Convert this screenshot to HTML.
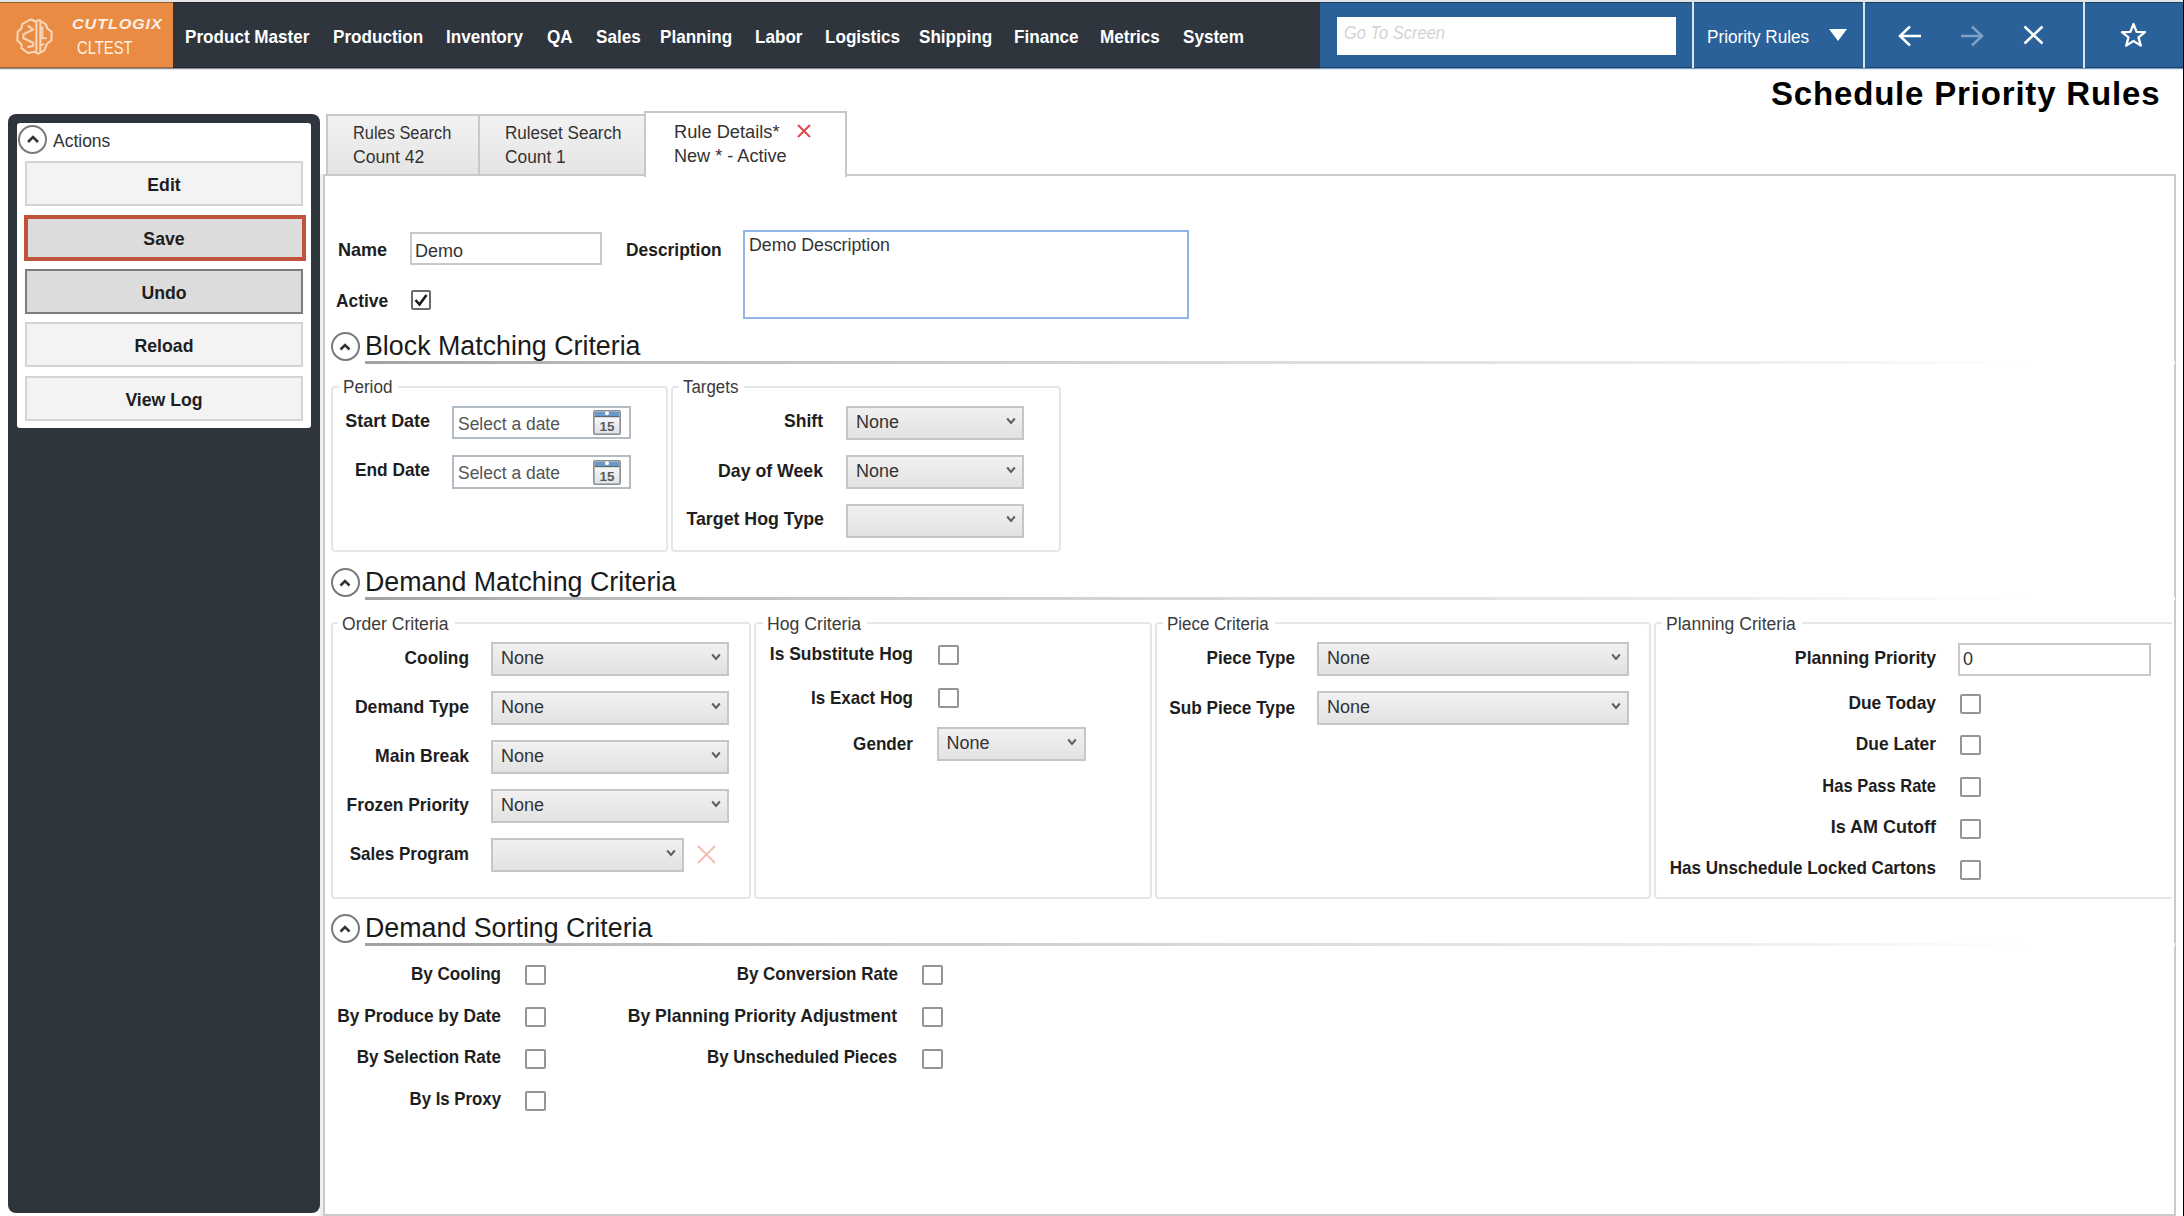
<!DOCTYPE html>
<html><head><meta charset="utf-8"><style>
*{box-sizing:border-box;margin:0;padding:0}
html,body{width:2184px;height:1216px;overflow:hidden;background:#fff;font-family:"Liberation Sans",sans-serif;color:#1e1e1e;position:relative}
div,span,svg{position:absolute;white-space:nowrap}
.btn{left:25px;width:278px;height:45px;background:#f3f3f3;border:2px solid #d4d4d4}
.tabg{border:2px solid #c8c8c8;border-bottom:none;background:linear-gradient(#f2f2f2,#e4e4e4)}
.chev{width:29px;height:29px;border:2px solid #7a7a7a;border-radius:50%}
.hr{height:3px;background:linear-gradient(90deg,#a2a2a2 0%,#bdbdbd 15%,#dadada 48%,#eeeeee 76%,#ffffff 92%)}
.grp{border:2px solid #e2e7eb;border-radius:4px}
.combo{height:34px;background:linear-gradient(#f1f1f1,#e2e2e2);border:2px solid #c6c6c6}
.cb{width:21px;height:20px;border:2px solid #959595;border-radius:2px;background:#fff}
.inp{background:#fff;border:2px solid #c9c9c9}
</style></head><body>
<div style="left:0;top:0;width:2184px;height:2px;background:#e3e5e8"></div>
<div style="left:0;top:2px;width:2184px;height:66px;background:#2e353d"></div>
<div style="left:0;top:2px;width:173px;height:66px;background:#e98b43"></div>
<div style="left:1320px;top:2px;width:864px;height:66px;background:#2a6199"></div>
<div style="left:0;top:2px;width:2184px;height:1px;background:rgba(0,0,0,0.35)"></div>
<div style="left:0;top:67px;width:2184px;height:1px;background:rgba(0,0,0,0.3)"></div>
<div style="left:0;top:68px;width:1320px;height:1px;background:#8a9097"></div>
<div style="left:0;top:69px;width:1320px;height:1px;background:#dfe3e7"></div>
<div style="left:1320px;top:68px;width:864px;height:1px;background:#7d9cbd"></div>
<div style="left:1320px;top:69px;width:864px;height:1px;background:#e4ebf2"></div>
<svg style="left:12px;top:14px" width="46" height="46" viewBox="0 0 46 46" fill="none" stroke="#f7d6b8" stroke-width="2.1" stroke-linejoin="round" stroke-linecap="round">
<path d="M22.7 7.6 C21 5.5 19.5 5.4 18.2 5.7 L10.2 10.2 L9.5 14.4 L5.7 17.8 L5.3 26.5 L9.5 30.3 L9.5 34.1 L15.9 39 L22.7 37.8 L26.5 39.7 L32.2 36.3 L35.2 29.5 L39.3 26.5 L39.7 17.8 L35.2 14.4 L34 10.6 L27.2 6 Z"/>
<path d="M24.4 7.2 V36.5 M28.4 6.8 V37"/>
<path d="M16.3 12.1 L21.2 15.5 L11.4 20.4 L11.4 24.2 L21.2 28.8 L21.2 32 L16.3 32.9"/>
<path d="M30.3 13.2 V24.2 H34 M28.4 31.2 L31.5 30.3"/>
</svg>
<span style="left:72px;top:16.30px;font-size:15px;line-height:15px;font-weight:bold;color:#fdf0e4;transform:scaleX(1.08);transform-origin:left top;font-style:italic;letter-spacing:0.8px;">CUTLOGIX</span>
<span style="left:77px;top:39.26px;font-size:18px;line-height:18px;font-weight:normal;color:#fdf0e4;transform:scaleX(0.82);transform-origin:left top;">CLTEST</span>
<span style="left:185px;top:26.92px;font-size:19px;line-height:19px;font-weight:bold;color:#ffffff;transform:scaleX(0.9);transform-origin:left top;">Product Master</span>
<span style="left:333px;top:26.92px;font-size:19px;line-height:19px;font-weight:bold;color:#ffffff;transform:scaleX(0.9);transform-origin:left top;">Production</span>
<span style="left:446px;top:26.92px;font-size:19px;line-height:19px;font-weight:bold;color:#ffffff;transform:scaleX(0.9);transform-origin:left top;">Inventory</span>
<span style="left:547px;top:26.92px;font-size:19px;line-height:19px;font-weight:bold;color:#ffffff;transform:scaleX(0.9);transform-origin:left top;">QA</span>
<span style="left:596px;top:26.92px;font-size:19px;line-height:19px;font-weight:bold;color:#ffffff;transform:scaleX(0.9);transform-origin:left top;">Sales</span>
<span style="left:660px;top:26.92px;font-size:19px;line-height:19px;font-weight:bold;color:#ffffff;transform:scaleX(0.9);transform-origin:left top;">Planning</span>
<span style="left:755px;top:26.92px;font-size:19px;line-height:19px;font-weight:bold;color:#ffffff;transform:scaleX(0.9);transform-origin:left top;">Labor</span>
<span style="left:825px;top:26.92px;font-size:19px;line-height:19px;font-weight:bold;color:#ffffff;transform:scaleX(0.9);transform-origin:left top;">Logistics</span>
<span style="left:919px;top:26.92px;font-size:19px;line-height:19px;font-weight:bold;color:#ffffff;transform:scaleX(0.9);transform-origin:left top;">Shipping</span>
<span style="left:1014px;top:26.92px;font-size:19px;line-height:19px;font-weight:bold;color:#ffffff;transform:scaleX(0.9);transform-origin:left top;">Finance</span>
<span style="left:1100px;top:26.92px;font-size:19px;line-height:19px;font-weight:bold;color:#ffffff;transform:scaleX(0.9);transform-origin:left top;">Metrics</span>
<span style="left:1183px;top:26.92px;font-size:19px;line-height:19px;font-weight:bold;color:#ffffff;transform:scaleX(0.9);transform-origin:left top;">System</span>
<div style="left:1337px;top:17px;width:339px;height:38px;background:#fff"></div>
<span style="left:1344px;top:24.26px;font-size:18px;line-height:18px;font-weight:normal;color:#d3d3d3;transform:scaleX(0.915);transform-origin:left top;font-style:italic;">Go To Screen</span>
<div style="left:1692px;top:2px;width:2px;height:66px;background:#d9e3ee"></div>
<div style="left:1863px;top:2px;width:2px;height:66px;background:#d9e3ee"></div>
<div style="left:2083px;top:2px;width:2px;height:66px;background:#d9e3ee"></div>
<span style="left:1707px;top:27.76px;font-size:18px;line-height:18px;font-weight:normal;color:#ffffff;transform:scaleX(0.955);transform-origin:left top;">Priority Rules</span>
<svg style="left:1828px;top:28px" width="20" height="14"><path d="M1 1 H19 L10 13 Z" fill="#fff"/></svg>
<svg style="left:1898px;top:25px" width="24" height="22" fill="none" stroke="#fff" stroke-width="2.5"><path d="M2 11 H23 M12 1.5 L2 11 L12 20.5"/></svg>
<svg style="left:1960px;top:25px" width="24" height="22" fill="none" stroke="#7fa3c8" stroke-width="2.5"><path d="M1 11 H22 M12 1.5 L22 11 L12 20.5"/></svg>
<svg style="left:2023px;top:25px" width="21" height="20" fill="none" stroke="#fff" stroke-width="2.6"><path d="M1.5 1.5 L19.5 18.5 M19.5 1.5 L1.5 18.5"/></svg>
<svg style="left:2120px;top:22px" width="27" height="26" fill="none" stroke="#fff" stroke-width="2.3" stroke-linejoin="round"><path d="M13.5 2 L16.6 9.8 L25 10.2 L18.5 15.4 L20.8 23.6 L13.5 19 L6.2 23.6 L8.5 15.4 L2 10.2 L10.4 9.8 Z"/></svg>
<div style="left:2183px;top:0px;width:1px;height:1216px;background:#000"></div>
<span style="left:1771px;top:75px;font-size:33px;font-weight:bold;color:#000;letter-spacing:0.82px;line-height:38px">Schedule Priority Rules</span>
<div style="left:8px;top:114px;width:312px;height:1098.5px;background:#2e353d;border-radius:8px"></div>
<div style="left:17px;top:123px;width:294px;height:305px;background:#fff;border-radius:3px"></div>
<div class="chev" style="left:18px;top:125px;border-color:#7a7a7a"></div>
<svg style="left:26px;top:134px" width="14" height="10" fill="none" stroke="#333" stroke-width="2.6"><path d="M2 8 L7 3 L12 8"/></svg>
<span style="left:53px;top:130.92px;font-size:19px;line-height:19px;font-weight:normal;color:#333;transform:scaleX(0.92);transform-origin:left top;">Actions</span>
<div class="btn" style="top:161px;background:#f3f3f3;border-color:#d4d4d4"></div>
<span style="left:-186.0px;width:700px;text-align:center;top:175.42px;font-size:19px;line-height:19px;font-weight:bold;color:#1e1e1e;transform:scaleX(0.93);transform-origin:center top;">Edit</span>
<div class="btn" style="left:24px;top:215px;width:282px;height:46px;background:#dcdcdc;border:4px solid #c0533b"></div>
<span style="left:-186.0px;width:700px;text-align:center;top:229.42px;font-size:19px;line-height:19px;font-weight:bold;color:#1e1e1e;transform:scaleX(0.93);transform-origin:center top;">Save</span>
<div class="btn" style="top:269px;background:#dcdcdc;border-color:#7d7d7d"></div>
<span style="left:-186.0px;width:700px;text-align:center;top:283.42px;font-size:19px;line-height:19px;font-weight:bold;color:#1e1e1e;transform:scaleX(0.93);transform-origin:center top;">Undo</span>
<div class="btn" style="top:322px;background:#f3f3f3;border-color:#d4d4d4"></div>
<span style="left:-186.0px;width:700px;text-align:center;top:336.42px;font-size:19px;line-height:19px;font-weight:bold;color:#1e1e1e;transform:scaleX(0.93);transform-origin:center top;">Reload</span>
<div class="btn" style="top:376px;background:#f3f3f3;border-color:#d4d4d4"></div>
<span style="left:-186.0px;width:700px;text-align:center;top:390.42px;font-size:19px;line-height:19px;font-weight:bold;color:#1e1e1e;transform:scaleX(0.93);transform-origin:center top;">View Log</span>
<div class="tabg" style="left:326px;top:114px;width:154px;height:62px"></div>
<div class="tabg" style="left:478px;top:114px;width:168px;height:62px"></div>
<div style="left:322.5px;top:174px;width:1853.5px;height:1042px;border:2px solid #cacaca;background:#fff"></div>
<div style="left:320px;top:174px;width:2.5px;height:1042px;background:#eeefef"></div>
<div style="left:644px;top:111px;width:203px;height:66px;background:#fff;border:2px solid #c8c8c8;border-bottom:none"></div>
<span style="left:353px;top:124.26px;font-size:18px;line-height:18px;font-weight:normal;color:#333;transform:scaleX(0.91);transform-origin:left top;">Rules Search</span>
<span style="left:353px;top:148.26px;font-size:18px;line-height:18px;font-weight:normal;color:#333;transform:scaleX(0.977);transform-origin:left top;">Count 42</span>
<span style="left:505px;top:124.26px;font-size:18px;line-height:18px;font-weight:normal;color:#333;transform:scaleX(0.947);transform-origin:left top;">Ruleset Search</span>
<span style="left:505px;top:148.26px;font-size:18px;line-height:18px;font-weight:normal;color:#333;transform:scaleX(0.963);transform-origin:left top;">Count 1</span>
<span style="left:674px;top:122.76px;font-size:18px;line-height:18px;font-weight:normal;color:#333;transform:scaleX(1.015);transform-origin:left top;">Rule Details*</span>
<span style="left:674px;top:146.76px;font-size:18px;line-height:18px;font-weight:normal;color:#333;transform:scaleX(1.005);transform-origin:left top;">New * - Active</span>
<svg style="left:797px;top:124px" width="14" height="14" fill="none" stroke="#e04848" stroke-width="2"><path d="M1 1 L13 13 M13 1 L1 13"/></svg>
<span style="left:338px;top:239.92px;font-size:19px;line-height:19px;font-weight:bold;color:#1e1e1e;transform:scaleX(0.95);transform-origin:left top;">Name</span>
<div class="inp" style="left:410px;top:232px;width:192px;height:33px"></div>
<span style="left:415px;top:241.76px;font-size:18px;line-height:18px;font-weight:normal;color:#333;">Demo</span>
<span style="left:625.5px;top:239.92px;font-size:19px;line-height:19px;font-weight:bold;color:#1e1e1e;transform:scaleX(0.915);transform-origin:left top;">Description</span>
<div class="inp" style="left:743px;top:229.5px;width:446px;height:89px;border-color:#90b5e6"></div>
<span style="left:748.5px;top:235.76px;font-size:18px;line-height:18px;font-weight:normal;color:#333;transform:scaleX(0.985);transform-origin:left top;">Demo Description</span>
<span style="left:335.5px;top:290.92px;font-size:19px;line-height:19px;font-weight:bold;color:#1e1e1e;transform:scaleX(0.915);transform-origin:left top;">Active</span>
<div class="cb" style="left:411px;top:290px;width:20px;height:20px;border-color:#6a6a6a"></div>
<svg style="left:413px;top:292px" width="16" height="16" fill="none" stroke="#1a1a1a" stroke-width="2.6"><path d="M2.5 8 L6.5 12.5 L13.5 3"/></svg>
<div class="chev" style="left:330.5px;top:332px"></div>
<svg style="left:339px;top:342px" width="12" height="9" fill="none" stroke="#333" stroke-width="2.6"><path d="M1.5 7.5 L6 3 L10.5 7.5"/></svg>
<span style="left:365px;top:332.51px;font-size:26.8px;line-height:26.8px;font-weight:normal;color:#1a1a1a;">Block Matching Criteria</span>
<div class="hr" style="left:365px;top:360.5px;width:1810px"></div>
<div class="chev" style="left:330.5px;top:568px"></div>
<svg style="left:339px;top:578px" width="12" height="9" fill="none" stroke="#333" stroke-width="2.6"><path d="M1.5 7.5 L6 3 L10.5 7.5"/></svg>
<span style="left:365px;top:568.51px;font-size:26.8px;line-height:26.8px;font-weight:normal;color:#1a1a1a;">Demand Matching Criteria</span>
<div class="hr" style="left:365px;top:596.5px;width:1810px"></div>
<div class="chev" style="left:330.5px;top:914px"></div>
<svg style="left:339px;top:924px" width="12" height="9" fill="none" stroke="#333" stroke-width="2.6"><path d="M1.5 7.5 L6 3 L10.5 7.5"/></svg>
<span style="left:365px;top:914.51px;font-size:26.8px;line-height:26.8px;font-weight:normal;color:#1a1a1a;">Demand Sorting Criteria</span>
<div class="hr" style="left:365px;top:942.5px;width:1810px"></div>
<div class="grp" style="left:330.6px;top:385.7px;width:337.4px;height:166.7px;"></div>
<div style="left:338.6px;top:381.7px;width:59.4px;height:10px;background:#fff"></div>
<span style="left:342.6px;top:378.46px;font-size:18px;line-height:18px;font-weight:normal;color:#3b3b3b;transform:scaleX(0.95);transform-origin:left top;">Period</span>
<div class="grp" style="left:670.5px;top:385.7px;width:390.5px;height:166.7px;"></div>
<div style="left:678.9px;top:381.7px;width:65.3px;height:10px;background:#fff"></div>
<span style="left:682.9px;top:378.46px;font-size:18px;line-height:18px;font-weight:normal;color:#3b3b3b;transform:scaleX(0.9373);transform-origin:left top;">Targets</span>
<span style="left:-270.07511764705885px;width:700px;text-align:right;top:411.42px;font-size:19px;line-height:19px;font-weight:bold;color:#1e1e1e;transform:scaleX(0.9429);transform-origin:right top;">Start Date</span>
<span style="left:-270.08796474358974px;width:700px;text-align:right;top:459.92px;font-size:19px;line-height:19px;font-weight:bold;color:#1e1e1e;transform:scaleX(0.9121);transform-origin:right top;">End Date</span>
<div class="inp" style="left:452px;top:405.5px;width:178.5px;height:33.5px;border-color:#b3bcc5"></div>
<span style="left:458px;top:414.76px;font-size:18px;line-height:18px;font-weight:normal;color:#555;transform:scaleX(0.97);transform-origin:left top;">Select a date</span>
<svg style="left:593px;top:410.0px" width="28" height="25"><defs><linearGradient id="cg405" x1="0" y1="0" x2="0" y2="1"><stop offset="0" stop-color="#ffffff"/><stop offset="1" stop-color="#dde1e5"/></linearGradient></defs><rect x="0.8" y="0.8" width="26.4" height="23.4" rx="1.5" fill="url(#cg405)" stroke="#8c8c8c" stroke-width="1.6"/><rect x="1.6" y="1.6" width="24.8" height="4.6" fill="#6b97c8"/><rect x="1.6" y="6" width="24.8" height="1.2" fill="#5d6873"/><circle cx="14" cy="3.3" r="2" fill="#fff"/><text x="14" y="21" font-size="13.5" font-family="Liberation Sans" font-weight="bold" fill="#5a5a5a" text-anchor="middle">15</text></svg>
<div class="inp" style="left:452px;top:455px;width:178.5px;height:33.5px;border-color:#b3bcc5"></div>
<span style="left:458px;top:464.26px;font-size:18px;line-height:18px;font-weight:normal;color:#555;transform:scaleX(0.97);transform-origin:left top;">Select a date</span>
<svg style="left:593px;top:459.5px" width="28" height="25"><defs><linearGradient id="cg455" x1="0" y1="0" x2="0" y2="1"><stop offset="0" stop-color="#ffffff"/><stop offset="1" stop-color="#dde1e5"/></linearGradient></defs><rect x="0.8" y="0.8" width="26.4" height="23.4" rx="1.5" fill="url(#cg455)" stroke="#8c8c8c" stroke-width="1.6"/><rect x="1.6" y="1.6" width="24.8" height="4.6" fill="#6b97c8"/><rect x="1.6" y="6" width="24.8" height="1.2" fill="#5d6873"/><circle cx="14" cy="3.3" r="2" fill="#fff"/><text x="14" y="21" font-size="13.5" font-family="Liberation Sans" font-weight="bold" fill="#5a5a5a" text-anchor="middle">15</text></svg>
<span style="left:123.49085937500001px;width:700px;text-align:right;top:411.42px;font-size:19px;line-height:19px;font-weight:bold;color:#1e1e1e;transform:scaleX(0.9237);transform-origin:right top;">Shift</span>
<div class="combo" style="left:846px;top:405.5px;width:178px"></div>
<span style="left:856px;top:412.76px;font-size:18px;line-height:18px;font-weight:normal;color:#333;">None</span>
<svg style="left:1005.5px;top:416.5px" width="10" height="8" fill="none" stroke="#5e5e5e" stroke-width="2"><path d="M1.2 1.5 L5 6 L8.8 1.5"/></svg>
<span style="left:123.41081753277149px;width:700px;text-align:right;top:460.92px;font-size:19px;line-height:19px;font-weight:bold;color:#1e1e1e;transform:scaleX(0.9323);transform-origin:right top;">Day of Week</span>
<div class="combo" style="left:846px;top:455px;width:178px"></div>
<span style="left:856px;top:462.26px;font-size:18px;line-height:18px;font-weight:normal;color:#333;">None</span>
<svg style="left:1005.5px;top:466px" width="10" height="8" fill="none" stroke="#5e5e5e" stroke-width="2"><path d="M1.2 1.5 L5 6 L8.8 1.5"/></svg>
<span style="left:123.5431846733668px;width:700px;text-align:right;top:509.42px;font-size:19px;line-height:19px;font-weight:bold;color:#1e1e1e;transform:scaleX(0.9351);transform-origin:right top;">Target Hog Type</span>
<div class="combo" style="left:846px;top:503.5px;width:178px"></div>
<svg style="left:1005.5px;top:514.5px" width="10" height="8" fill="none" stroke="#5e5e5e" stroke-width="2"><path d="M1.2 1.5 L5 6 L8.8 1.5"/></svg>
<div class="grp" style="left:330.6px;top:622px;width:420.8px;height:276.8px;"></div>
<div style="left:338.3px;top:618px;width:116.5px;height:10px;background:#fff"></div>
<span style="left:342.3px;top:614.76px;font-size:18px;line-height:18px;font-weight:normal;color:#3b3b3b;transform:scaleX(0.9762);transform-origin:left top;">Order Criteria</span>
<div class="grp" style="left:753.9px;top:622px;width:398.6px;height:276.8px;"></div>
<div style="left:762.7px;top:618px;width:104.2px;height:10px;background:#fff"></div>
<span style="left:766.7px;top:614.76px;font-size:18px;line-height:18px;font-weight:normal;color:#3b3b3b;transform:scaleX(0.9802);transform-origin:left top;">Hog Criteria</span>
<div class="grp" style="left:1154.9px;top:622px;width:496.4px;height:276.8px;"></div>
<div style="left:1163.2px;top:618px;width:111.8px;height:10px;background:#fff"></div>
<span style="left:1167.2px;top:614.76px;font-size:18px;line-height:18px;font-weight:normal;color:#3b3b3b;transform:scaleX(0.9417);transform-origin:left top;">Piece Criteria</span>
<div class="grp" style="left:1653.9px;top:622px;width:518.1px;height:276.8px;border-right:none;border-top-right-radius:0;border-bottom-right-radius:0;"></div>
<div style="left:1661.8px;top:618px;width:140.0px;height:10px;background:#fff"></div>
<span style="left:1665.8px;top:614.76px;font-size:18px;line-height:18px;font-weight:normal;color:#3b3b3b;transform:scaleX(0.976);transform-origin:left top;">Planning Criteria</span>
<span style="left:-231.21652052238807px;width:700px;text-align:right;top:647.72px;font-size:19px;line-height:19px;font-weight:bold;color:#1e1e1e;transform:scaleX(0.9106);transform-origin:right top;">Cooling</span>
<div class="combo" style="left:491px;top:641.5px;width:238px"></div>
<span style="left:501px;top:648.76px;font-size:18px;line-height:18px;font-weight:normal;color:#333;">None</span>
<svg style="left:710.5px;top:652.5px" width="10" height="8" fill="none" stroke="#5e5e5e" stroke-width="2"><path d="M1.2 1.5 L5 6 L8.8 1.5"/></svg>
<span style="left:-231.20611075407027px;width:700px;text-align:right;top:696.72px;font-size:19px;line-height:19px;font-weight:bold;color:#1e1e1e;transform:scaleX(0.9263);transform-origin:right top;">Demand Type</span>
<div class="combo" style="left:491px;top:690.5px;width:238px"></div>
<span style="left:501px;top:697.76px;font-size:18px;line-height:18px;font-weight:normal;color:#333;">None</span>
<svg style="left:710.5px;top:701.5px" width="10" height="8" fill="none" stroke="#5e5e5e" stroke-width="2"><path d="M1.2 1.5 L5 6 L8.8 1.5"/></svg>
<span style="left:-231.2596058792924px;width:700px;text-align:right;top:745.72px;font-size:19px;line-height:19px;font-weight:bold;color:#1e1e1e;transform:scaleX(0.9267);transform-origin:right top;">Main Break</span>
<div class="combo" style="left:491px;top:739.5px;width:238px"></div>
<span style="left:501px;top:746.76px;font-size:18px;line-height:18px;font-weight:normal;color:#333;">None</span>
<svg style="left:710.5px;top:750.5px" width="10" height="8" fill="none" stroke="#5e5e5e" stroke-width="2"><path d="M1.2 1.5 L5 6 L8.8 1.5"/></svg>
<span style="left:-231.17891732283465px;width:700px;text-align:right;top:794.72px;font-size:19px;line-height:19px;font-weight:bold;color:#1e1e1e;transform:scaleX(0.9131);transform-origin:right top;">Frozen Priority</span>
<div class="combo" style="left:491px;top:788.5px;width:238px"></div>
<span style="left:501px;top:795.76px;font-size:18px;line-height:18px;font-weight:normal;color:#333;">None</span>
<svg style="left:710.5px;top:799.5px" width="10" height="8" fill="none" stroke="#5e5e5e" stroke-width="2"><path d="M1.2 1.5 L5 6 L8.8 1.5"/></svg>
<span style="left:-231.23399955392546px;width:700px;text-align:right;top:843.92px;font-size:19px;line-height:19px;font-weight:bold;color:#1e1e1e;transform:scaleX(0.8963);transform-origin:right top;">Sales Program</span>
<div class="combo" style="left:491px;top:837.5px;width:193px"></div>
<svg style="left:665.5px;top:848.5px" width="10" height="8" fill="none" stroke="#5e5e5e" stroke-width="2"><path d="M1.2 1.5 L5 6 L8.8 1.5"/></svg>
<svg style="left:696px;top:844px" width="21" height="21" fill="none" stroke="#f5bdb2" stroke-width="2"><path d="M2 2 L19 19 M19 2 L2 19"/></svg>
<span style="left:213.30151182432428px;width:700px;text-align:right;top:644.42px;font-size:19px;line-height:19px;font-weight:bold;color:#1e1e1e;transform:scaleX(0.9166);transform-origin:right top;">Is Substitute Hog</span>
<div class="cb" style="left:938px;top:645px"></div>
<span style="left:213.3353819444444px;width:700px;text-align:right;top:687.92px;font-size:19px;line-height:19px;font-weight:bold;color:#1e1e1e;transform:scaleX(0.8939);transform-origin:right top;">Is Exact Hog</span>
<div class="cb" style="left:938px;top:688px"></div>
<span style="left:213.31782738095228px;width:700px;text-align:right;top:733.92px;font-size:19px;line-height:19px;font-weight:bold;color:#1e1e1e;transform:scaleX(0.9008);transform-origin:right top;">Gender</span>
<div class="combo" style="left:936.5px;top:726.5px;width:149px"></div>
<span style="left:946.5px;top:733.76px;font-size:18px;line-height:18px;font-weight:normal;color:#333;">None</span>
<svg style="left:1067.0px;top:737.5px" width="10" height="8" fill="none" stroke="#5e5e5e" stroke-width="2"><path d="M1.2 1.5 L5 6 L8.8 1.5"/></svg>
<span style="left:595.417900485437px;width:700px;text-align:right;top:648.42px;font-size:19px;line-height:19px;font-weight:bold;color:#1e1e1e;transform:scaleX(0.9044);transform-origin:right top;">Piece Type</span>
<div class="combo" style="left:1317px;top:642px;width:312px"></div>
<span style="left:1327px;top:649.26px;font-size:18px;line-height:18px;font-weight:normal;color:#333;">None</span>
<svg style="left:1610.5px;top:653px" width="10" height="8" fill="none" stroke="#5e5e5e" stroke-width="2"><path d="M1.2 1.5 L5 6 L8.8 1.5"/></svg>
<span style="left:595.4164175208809px;width:700px;text-align:right;top:697.72px;font-size:19px;line-height:19px;font-weight:bold;color:#1e1e1e;transform:scaleX(0.9049);transform-origin:right top;">Sub Piece Type</span>
<div class="combo" style="left:1317px;top:691px;width:312px"></div>
<span style="left:1327px;top:698.26px;font-size:18px;line-height:18px;font-weight:normal;color:#333;">None</span>
<svg style="left:1610.5px;top:702px" width="10" height="8" fill="none" stroke="#5e5e5e" stroke-width="2"><path d="M1.2 1.5 L5 6 L8.8 1.5"/></svg>
<span style="left:1235.8214344618054px;width:700px;text-align:right;top:648.22px;font-size:19px;line-height:19px;font-weight:bold;color:#1e1e1e;transform:scaleX(0.9283);transform-origin:right top;">Planning Priority</span>
<div class="inp" style="left:1958px;top:642.5px;width:193px;height:33px"></div>
<span style="left:1963px;top:649.76px;font-size:18px;line-height:18px;font-weight:normal;color:#333;">0</span>
<span style="left:1235.7788726571114px;width:700px;text-align:right;top:692.62px;font-size:19px;line-height:19px;font-weight:bold;color:#1e1e1e;transform:scaleX(0.915);transform-origin:right top;">Due Today</span>
<div class="cb" style="left:1959.5px;top:694px"></div>
<span style="left:1235.8211370481927px;width:700px;text-align:right;top:734.32px;font-size:19px;line-height:19px;font-weight:bold;color:#1e1e1e;transform:scaleX(0.9154);transform-origin:right top;">Due Later</span>
<div class="cb" style="left:1959.5px;top:735px"></div>
<span style="left:1235.7785266418211px;width:700px;text-align:right;top:775.52px;font-size:19px;line-height:19px;font-weight:bold;color:#1e1e1e;transform:scaleX(0.868);transform-origin:right top;">Has Pass Rate</span>
<div class="cb" style="left:1959.5px;top:777px"></div>
<span style="left:1235.7109375px;width:700px;text-align:right;top:816.72px;font-size:19px;line-height:19px;font-weight:bold;color:#1e1e1e;transform:scaleX(0.9474);transform-origin:right top;">Is AM Cutoff</span>
<div class="cb" style="left:1959.5px;top:819px"></div>
<span style="left:1235.7792845072927px;width:700px;text-align:right;top:858.32px;font-size:19px;line-height:19px;font-weight:bold;color:#1e1e1e;transform:scaleX(0.8972);transform-origin:right top;">Has Unschedule Locked Cartons</span>
<div class="cb" style="left:1959.5px;top:860px"></div>
<span style="left:-199.10592763157894px;width:700px;text-align:right;top:964.12px;font-size:19px;line-height:19px;font-weight:bold;color:#1e1e1e;transform:scaleX(0.8985);transform-origin:right top;">By Cooling</span>
<div class="cb" style="left:525px;top:965px"></div>
<span style="left:-199.14516644620818px;width:700px;text-align:right;top:1005.72px;font-size:19px;line-height:19px;font-weight:bold;color:#1e1e1e;transform:scaleX(0.9128);transform-origin:right top;">By Produce by Date</span>
<div class="cb" style="left:525px;top:1007px"></div>
<span style="left:-199.1444711538462px;width:700px;text-align:right;top:1047.22px;font-size:19px;line-height:19px;font-weight:bold;color:#1e1e1e;transform:scaleX(0.8988);transform-origin:right top;">By Selection Rate</span>
<div class="cb" style="left:525px;top:1049px"></div>
<span style="left:-199.14372133027524px;width:700px;text-align:right;top:1088.62px;font-size:19px;line-height:19px;font-weight:bold;color:#1e1e1e;transform:scaleX(0.8836);transform-origin:right top;">By Is Proxy</span>
<div class="cb" style="left:525px;top:1091px"></div>
<span style="left:197.54274214181282px;width:700px;text-align:right;top:964.12px;font-size:19px;line-height:19px;font-weight:bold;color:#1e1e1e;transform:scaleX(0.8936);transform-origin:right top;">By Conversion Rate</span>
<div class="cb" style="left:921.5px;top:965px"></div>
<span style="left:197.467914283769px;width:700px;text-align:right;top:1005.72px;font-size:19px;line-height:19px;font-weight:bold;color:#1e1e1e;transform:scaleX(0.9264);transform-origin:right top;">By Planning Priority Adjustment</span>
<div class="cb" style="left:921.5px;top:1007px"></div>
<span style="left:197.4853905096012px;width:700px;text-align:right;top:1047.22px;font-size:19px;line-height:19px;font-weight:bold;color:#1e1e1e;transform:scaleX(0.8858);transform-origin:right top;">By Unscheduled Pieces</span>
<div class="cb" style="left:921.5px;top:1049px"></div>
</body></html>
